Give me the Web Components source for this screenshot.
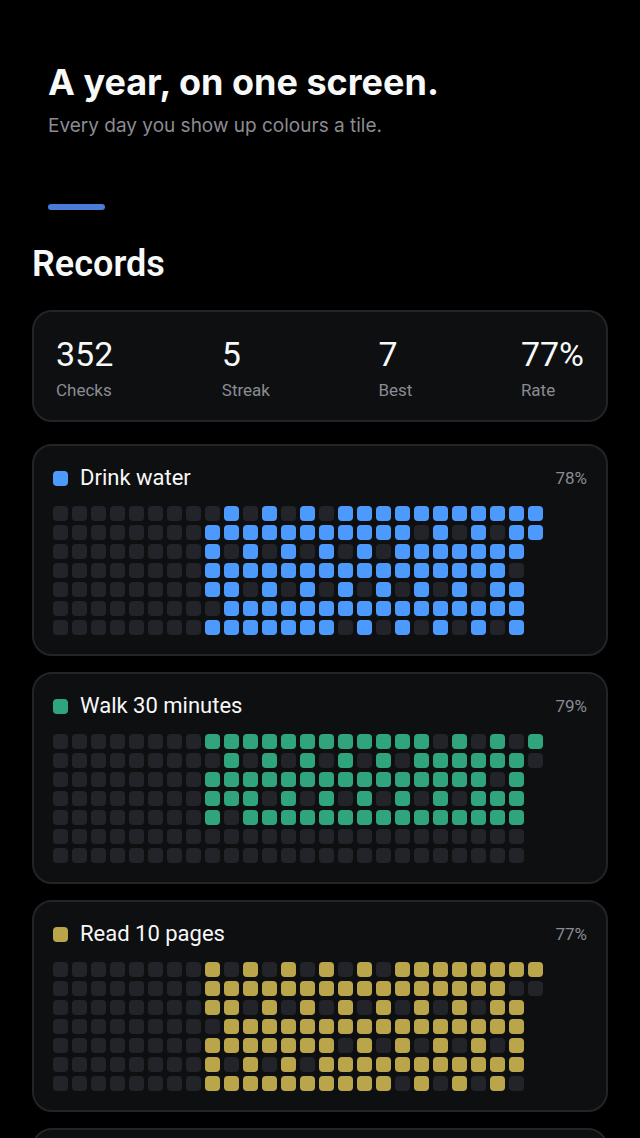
<!DOCTYPE html>
<html lang="en">
<head>
<meta charset="utf-8">
<meta name="viewport" content="width=device-width, initial-scale=1">
<title>Records</title>
<style>
    :root {
        --bg: #000000;
        --card: #0e0f11;
        --line: #222428;
        --tile: #232429;
        --text: #f7f8f8;
        --muted: #8a8c92;
    }

    body {
        margin: 0;
        background: var(--bg);
        color: var(--text);
        font-family: Roboto, "Liberation Sans", sans-serif;
        height: 100vh;
        overflow: hidden;
    }
</style>
</head>
<body>

<habit-page>
    <page-intro slot="intro" accent="#4a7bd6">
        <span slot="title">A year, on one screen.</span>
        <span slot="subtitle">Every day you show up colours a tile.</span>
    </page-intro>
    <span slot="heading">Records</span>
    <stat-bar>
        <stat-item value="352">Checks</stat-item>
        <stat-item value="5">Streak</stat-item>
        <stat-item value="7">Best</stat-item>
        <stat-item value="77%">Rate</stat-item>
    </stat-bar>
    <habit-list>
        <habit-card color="#4d9aff" rate="78%" days="
            010101011111111111
            111111111110101011
            10101010101111111
            11111111111111110
            11010101010101011
            01111111111111111
            11111110101010101">Drink water</habit-card>
        <habit-card color="#30a47c" rate="79%" days="
            111111111111010101
            010101010101111110
            11111111111111101
            11101010101010111
            10111111111111111
            00000000000000000
            00000000000000000">Walk 30 minutes</habit-card>
        <habit-card color="#baa54b" rate="77%" days="
            101010101011111111
            111111111111111100
            11010101010101011
            01111111111111111
            11111110101010101
            10101011111111111
            11111111110101010">Read 10 pages</habit-card>
        <habit-card></habit-card>
    </habit-list>
</habit-page>

<script>
// Weeks before the first check, drawn as empty tiles on every row
const EMPTY_WEEKS = 8

var templatePage = document.createElement('template')
templatePage.innerHTML = `
<style>
    :host {
        display: block;
        padding: 60px 32px 0;
    }

    h2 {
        margin: 32px 0 24px;
        font-size: 36px;
        line-height: 44px;
        font-weight: 600;
    }
</style>

<slot name="intro"></slot>
<main>
    <h2><slot name="heading"></slot></h2>
    <slot></slot>
</main>
`

var templateIntro = document.createElement('template')
templateIntro.innerHTML = `
<style>
    :host {
        display: block;
        padding: 0 16px;
        font-family: Inter, "Liberation Sans", sans-serif;
    }

    h1 {
        margin: 0;
        font-size: 36px;
        line-height: 44px;
        font-weight: 700;
    }

    p {
        margin: 8px 0 0;
        font-size: 19px;
        line-height: 28px;
        color: var(--muted);
    }

    #accent {
        width: 57px;
        height: 6px;
        margin-top: 64px;
        border-radius: 3px;
    }
</style>

<header>
    <h1><slot name="title"></slot></h1>
    <p><slot name="subtitle"></slot></p>
    <div id="accent"></div>
</header>
`

var templateStatBar = document.createElement('template')
templateStatBar.innerHTML = `
<style>
    :host {
        display: flex;
        justify-content: space-between;
        padding: 22px 22px 18px;
        background: var(--card);
        border: 2px solid var(--line);
        border-radius: 20px;
    }
</style>

<slot></slot>
`

var templateStat = document.createElement('template')
templateStat.innerHTML = `
<style>
    :host {
        display: flex;
        flex-direction: column;
        gap: 4px;
    }

    #value {
        font-size: 34px;
        line-height: 40px;
    }

    #label {
        font-size: 17px;
        line-height: 24px;
        color: var(--muted);
    }
</style>

<span id="value"></span>
<span id="label"><slot></slot></span>
`

var templateList = document.createElement('template')
templateList.innerHTML = `
<style>
    :host {
        display: flex;
        flex-direction: column;
        gap: 16px;
        margin-top: 22px;
    }
</style>

<slot></slot>
`

var templateCard = document.createElement('template')
templateCard.innerHTML = `
<style>
    :host {
        display: block;
        padding: 19px;
        background: var(--card);
        border: 2px solid var(--line);
        border-radius: 20px;
    }

    #head {
        display: flex;
        align-items: center;
        gap: 12px;
        margin-bottom: 15px;
    }

    h3 {
        flex: 1;
        margin: 0;
        min-height: 26px;
        font-size: 22px;
        line-height: 26px;
        font-weight: 400;
    }

    #rate {
        font-size: 17px;
        line-height: 26px;
        color: var(--muted);
    }

    #tiles {
        display: flex;
        flex-direction: column;
        gap: 4px;
    }

    .row {
        display: flex;
        gap: 4px;
    }

    .tile {
        width: 15px;
        height: 15px;
        border-radius: 4px;
        background: var(--tile);
    }

    .tile.on {
        background: var(--habit);
    }
</style>

<div id="head">
    <span class="tile on"></span>
    <h3><slot></slot></h3>
    <span id="rate"></span>
</div>
<div id="tiles"></div>
`

class HabitPage extends HTMLElement {
    constructor() {
        super()
        this.attachShadow({ mode: 'open' }).appendChild(templatePage.content.cloneNode(true))
    }
}

class PageIntro extends HTMLElement {
    constructor() {
        super()
        this.attachShadow({ mode: 'open' }).appendChild(templateIntro.content.cloneNode(true))
    }

    connectedCallback() {
        this.shadowRoot.getElementById('accent').style.background = this.getAttribute('accent')
    }
}

class StatBar extends HTMLElement {
    constructor() {
        super()
        this.attachShadow({ mode: 'open' }).appendChild(templateStatBar.content.cloneNode(true))
    }
}

class StatItem extends HTMLElement {
    constructor() {
        super()
        this.attachShadow({ mode: 'open' }).appendChild(templateStat.content.cloneNode(true))
    }

    connectedCallback() {
        this.shadowRoot.getElementById('value').textContent = this.getAttribute('value')
    }
}

class HabitList extends HTMLElement {
    constructor() {
        super()
        this.attachShadow({ mode: 'open' }).appendChild(templateList.content.cloneNode(true))
    }
}

class HabitCard extends HTMLElement {
    constructor() {
        super()
        this.attachShadow({ mode: 'open' }).appendChild(templateCard.content.cloneNode(true))
    }

    connectedCallback() {
        this.style.setProperty('--habit', this.getAttribute('color') || 'transparent')
        this.shadowRoot.getElementById('rate').textContent = this.getAttribute('rate') || ''
        this.render()
    }

    // One row per weekday, one tile per week
    render() {
        const tiles = this.shadowRoot.getElementById('tiles')
        const days = (this.getAttribute('days') || '').trim()
        tiles.replaceChildren()
        if (!days) return

        for (const line of days.split(/\s+/)) {
            const row = document.createElement('div')
            row.className = 'row'
            for (const day of '0'.repeat(EMPTY_WEEKS) + line) {
                const tile = document.createElement('span')
                tile.className = day === '1' ? 'tile on' : 'tile'
                row.appendChild(tile)
            }
            tiles.appendChild(row)
        }
    }
}

window.customElements.define('habit-page', HabitPage)
window.customElements.define('page-intro', PageIntro)
window.customElements.define('stat-bar', StatBar)
window.customElements.define('stat-item', StatItem)
window.customElements.define('habit-list', HabitList)
window.customElements.define('habit-card', HabitCard)
</script>
</body>
</html>
